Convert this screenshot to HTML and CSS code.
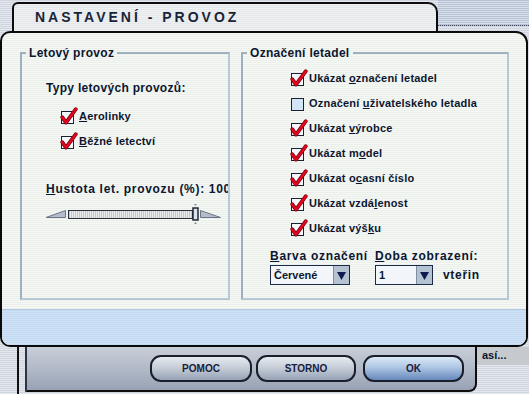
FILE: index.html
```html
<!DOCTYPE html>
<html lang="cs">
<head>
<meta charset="utf-8">
<title>Nastavení - provoz</title>
<link rel="stylesheet" href="styles.css">
</head>
<body>
<svg class="defs" width="0" height="0" aria-hidden="true">
  <defs>
    <symbol id="chk-on" viewBox="0 0 18 18">
      <rect x="1.5" y="4.5" width="12" height="12" fill="#f4f8fc" stroke="#1a2030" stroke-width="1"/>
      <polyline points="2.2,10.2 6,15.6 15.8,2.2" fill="none" stroke="#7a0010" stroke-width="3.8" stroke-linecap="round" stroke-linejoin="round"/>
      <polyline points="2.2,10.2 6,15.6 15.8,2.2" fill="none" stroke="#e4061e" stroke-width="2.4" stroke-linecap="round" stroke-linejoin="round"/>
    </symbol>
    <symbol id="chk-off" viewBox="0 0 18 18">
      <rect x="1.5" y="4.5" width="12" height="12" fill="#d2e4f6" stroke="#1a2030" stroke-width="1"/>
    </symbol>
  </defs>
</svg>
<div class="screen">
  <div class="top">
    <div class="tab"><h1 class="title">NASTAVENÍ - PROVOZ</h1></div>
    <div class="top-rest"></div>
  </div>

  <div class="panel">
    <div class="groups">
      <fieldset class="group group-left">
        <legend>Letový provoz</legend>
        <div class="subhead">Typy letových provozů:</div>
        <div class="checks checks-left">
          <label class="check"><svg class="cb"><use href="#chk-on"/></svg><span><u>A</u>erolinky</span></label>
          <label class="check"><svg class="cb"><use href="#chk-on"/></svg><span><u>B</u>ěžné letectví</span></label>
        </div>
        <div class="density"><u>H</u>ustota let. provozu (%): 100</div>
        <div class="slider">
          <svg class="tri" width="20" height="8" viewBox="0 0 20 8"><polygon points="0,7.5 19.5,0.5 19.5,7.5" fill="#b4bccc" stroke="#6c7488" stroke-width="1"/></svg>
          <div class="track"></div>
          <svg class="thumb" width="7" height="22" viewBox="0 0 7 22">
            <path d="M2 1 L5 1 L3.5 3 Z" fill="#8a90a0"/>
            <rect x="1" y="5" width="5" height="12" fill="#dce2ea" stroke="#202838" stroke-width="1.5"/>
            <path d="M2 21 L5 21 L3.5 19 Z" fill="#8a90a0"/>
          </svg>
          <svg class="tri" width="21" height="8" viewBox="0 0 21 8"><polygon points="0.5,0.5 20.5,7.5 0.5,7.5" fill="#b4bccc" stroke="#6c7488" stroke-width="1"/></svg>
        </div>
      </fieldset>

      <fieldset class="group group-right">
        <legend>Označení letadel</legend>
        <div class="checks checks-right">
          <label class="check"><svg class="cb"><use href="#chk-on"/></svg><span>Ukázat <u>o</u>značení letadel</span></label>
          <label class="check"><svg class="cb"><use href="#chk-off"/></svg><span>Označení <u>u</u>živatelského letadla</span></label>
          <label class="check"><svg class="cb"><use href="#chk-on"/></svg><span>Ukázat <u>v</u>ýrobce</span></label>
          <label class="check"><svg class="cb"><use href="#chk-on"/></svg><span>Ukázat m<u>o</u>del</span></label>
          <label class="check"><svg class="cb"><use href="#chk-on"/></svg><span>Ukázat o<u>c</u>asní číslo</span></label>
          <label class="check"><svg class="cb"><use href="#chk-on"/></svg><span>Ukázat vzdá<u>l</u>enost</span></label>
          <label class="check"><svg class="cb"><use href="#chk-on"/></svg><span>Ukázat výš<u>k</u>u</span></label>
        </div>
        <div class="selects">
          <div class="sel-label"><u>B</u>arva označení</div>
          <div class="sel-label"><u>D</u>oba zobrazení:</div>
          <div class="dropdown dd-color"><span class="dd-text">Červené</span><span class="dd-btn"><svg width="9" height="9" viewBox="0 0 9 9"><polygon points="0,1 9,1 4.5,9" fill="#0e1c52"/></svg></span></div>
          <div class="dd-row">
            <div class="dropdown dd-time"><span class="dd-text">1</span><span class="dd-btn"><svg width="9" height="9" viewBox="0 0 9 9"><polygon points="0,1 9,1 4.5,9" fill="#0e1c52"/></svg></span></div>
            <span class="unit">vteřin</span>
          </div>
        </div>
      </fieldset>
    </div>
    <div class="panel-foot"><div class="foot-bar"></div></div>
  </div>

  <div class="bottom">
    <div class="bottom-left"></div>
    <div class="shelf">
      <button class="btn btn-help">POMOC</button>
      <button class="btn btn-cancel">STORNO</button>
      <button class="btn btn-ok">OK</button>
    </div>
    <div class="bottom-right"><div class="behind">así...</div></div>
  </div>
</div>
</body>
</html>
```

FILE: styles.css
```css
* { box-sizing: border-box; }
html, body { margin: 0; padding: 0; }
body {
  font-family: "Liberation Sans", Arial, sans-serif;
  color: #0c1630;
  background: #d8dee6;
}
.defs { position: absolute; width: 0; height: 0; overflow: hidden; }

.screen {
  width: 529px;
  height: 394px;
  overflow: hidden;
  display: flex;
  flex-direction: column;
  background: repeating-linear-gradient(to bottom, #cfd5de 0 1px, #e4e8ee 1px 2px);
}

/* title tab */
.top { display: flex; height: 31px; flex: none; }
.tab {
  margin-left: 12px;
  margin-top: 2px;
  width: 426px;
  height: 29px;
  border: 2px solid #0c0c0c;
  border-bottom: none;
  border-radius: 6px 10px 0 0;
  background: repeating-linear-gradient(to bottom, #eef0f2 0 1px, #e4e8ea 1px 2px);
  padding-left: 21px;
  display: flex;
  align-items: center;
}
.title {
  margin: 0 0 1px;
  font-size: 14px;
  font-weight: bold;
  letter-spacing: 3px;
  color: #1a2438;
}
.top-rest {
  flex: 1;
  height: 26px;
  border-bottom: 1px dotted #3c4458;
  background: repeating-linear-gradient(to bottom, #b6c2d4 0 1px, #d8e0ea 1px 2px);
}

/* main panel */
.panel {
  flex: none;
  width: 528px;
  height: 316px;
  border: 2px solid #0a0a0a;
  border-radius: 10px 12px 10px 10px;
  overflow: hidden;
  display: flex;
  flex-direction: column;
  background: repeating-linear-gradient(to bottom, #f6f8f4 0 1px, #ebefec 1px 2px);
}
.groups {
  flex: 1;
  display: flex;
  gap: 11px;
  padding: 13px 17px 0 18px;
}
.group {
  margin: 0;
  padding: 0;
  min-width: 0;
  border: 2px solid #b6c8d4;
  border-left-color: #9cb0c0;
  border-top-color: #9cb0c0;
  display: flex;
  flex-direction: column;
}
.group-left { width: 210px; }
.group-right { width: 268px; }
.group legend {
  margin-left: 4px;
  padding: 0 3px;
  font-size: 12px;
  line-height: 14px;
  font-weight: bold;
  letter-spacing: 0.3px;
}

.subhead {
  margin: 21px 0 0 24px;
  font-size: 12px;
  line-height: 14px;
  font-weight: bold;
  letter-spacing: 0.3px;
}
.checks { display: flex; flex-direction: column; gap: 7px; }
.checks-left { margin: 12px 0 0 38px; }
.checks-right { margin: 9px 0 0 47px; }
.check {
  display: flex;
  align-items: center;
  height: 18px;
  font-size: 11px;
  font-weight: bold;
  letter-spacing: 0.2px;
}
.cb { width: 18px; height: 18px; flex: none; margin-right: 1px; overflow: visible; }

.density {
  margin: 32px 0 0 24px;
  font-size: 12px;
  line-height: 14px;
  font-weight: bold;
  letter-spacing: 0.7px;
  white-space: nowrap;
  overflow: hidden;
}
.slider {
  margin: 7px 0 0 24px;
  display: flex;
  align-items: center;
  height: 22px;
}
.tri { display: block; flex: none; }
.slider .tri:first-child { margin-right: 2px; }
.track {
  width: 125px;
  height: 9px;
  border: 1px solid #2a2e38;
  background: repeating-linear-gradient(to right, #c4c8cc 0 1px, #e8eaec 1px 2px);
}
.thumb { display: block; flex: none; margin: 0 1px 0 -1px; }

/* selects */
.selects {
  margin: 12px 0 0 27px;
  display: grid;
  grid-template-columns: 105px auto;
  row-gap: 2px;
}
.sel-label {
  font-size: 12px;
  line-height: 14px;
  font-weight: bold;
  letter-spacing: 0.7px;
  white-space: nowrap;
}
.dropdown {
  height: 20px;
  display: flex;
  border: 1px solid #1c2a4a;
  background: #f2f6fa;
}
.dd-color { width: 80px; }
.dd-time { width: 58px; }
.dd-text {
  flex: 1;
  padding-left: 3px;
  font-size: 11px;
  font-weight: bold;
  line-height: 18px;
}
.dd-btn {
  width: 16px;
  background: #b4c2d2;
  border-left: 1px solid #7e8ea4;
  display: flex;
  align-items: center;
  justify-content: center;
}
.dd-btn svg { display: block; }
.dd-row { display: flex; align-items: center; gap: 10px; }
.unit { font-size: 12px; font-weight: bold; letter-spacing: 0.7px; }

/* panel footer */
.panel-foot { flex: none; height: 45px; padding-top: 9px; }
.foot-bar {
  height: 100%;
  border-top: 1px solid #b0c8e0;
  background: repeating-linear-gradient(to bottom, #c4daf2 0 1px, #cee0f4 1px 2px);
}

/* bottom shelf */
.bottom { flex: 1; display: flex; }
.bottom-left {
  width: 19px;
  border-right: 2px solid #111;
  margin-right: 6px;
}
.shelf {
  width: 452px;
  height: 45px;
  border: 2px solid #0e0e10;
  border-top: none;
  border-left-color: #2c3444;
  border-radius: 0 0 8px 0;
  background: linear-gradient(to bottom, #c8ced8 0%, #b2bac8 50%, #98a2b4 100%);
  padding: 8px 0 0 123px;
  display: flex;
  align-items: flex-start;
}
.btn {
  height: 27px;
  margin: 0;
  border: 2px solid #1a1e2a;
  border-radius: 11px;
  font-family: "Liberation Sans", Arial, sans-serif;
  font-size: 10px;
  font-weight: bold;
  color: #16203c;
  background: linear-gradient(to bottom, #e6eaf0 0%, #c6ced8 45%, #96a2b6 100%);
  padding: 0;
}
.btn-help { width: 102px; margin-right: 4px; }
.btn-cancel { width: 100px; margin-right: 7px; }
.btn-ok {
  width: 101px;
  background: linear-gradient(to bottom, #dce8f6 0%, #aec6e4 45%, #6688bc 100%);
}
.bottom-right { flex: 1; }
.behind {
  height: 18px;
  background: #c6cace;
  font-size: 11px;
  font-weight: bold;
  line-height: 16px;
  padding-left: 5px;
  color: #0c1630;
}
```
